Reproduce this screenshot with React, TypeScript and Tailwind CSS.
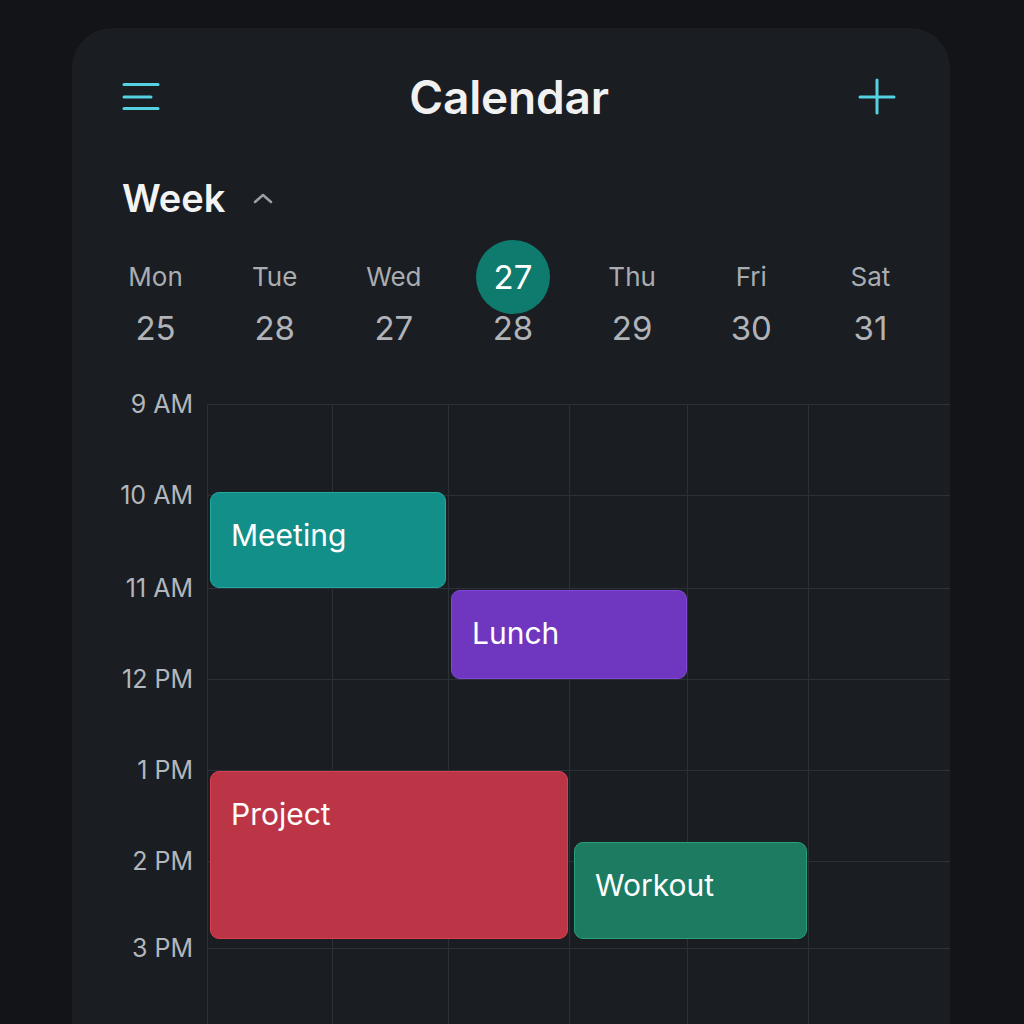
import React from 'react'

type CalEvent = {
  title: string
  left: number
  top: number
  width: number
  height: number
  className: string
}

const days = [
  { label: 'Mon', date: 25 },
  { label: 'Tue', date: 28 },
  { label: 'Wed', date: 27 },
  { label: '27', date: 28, today: true },
  { label: 'Thu', date: 29 },
  { label: 'Fri', date: 30 },
  { label: 'Sat', date: 31 },
]

// hour rows, heights in px
const hours = [
  { label: '9 AM', h: 91 },
  { label: '10 AM', h: 93 },
  { label: '11 AM', h: 91 },
  { label: '12 PM', h: 91 },
  { label: '1 PM', h: 91 },
  { label: '2 PM', h: 87 },
  { label: '3 PM', h: 91 },
]

const events: CalEvent[] = [
  { title: 'Meeting', left: 3, top: 88, width: 236, height: 96, className: 'bg-[#138f89] border-[#22aaa1]' },
  { title: 'Lunch', left: 244, top: 186, width: 236, height: 89, className: 'bg-[#6f36c0] border-[#8247d8]' },
  { title: 'Project', left: 3, top: 367, width: 358, height: 168, className: 'bg-[#bb3546] border-[#db4052]' },
  { title: 'Workout', left: 367, top: 438, width: 233, height: 97, className: 'bg-[#1d7b61] border-[#27a07a]' },
]

const MenuIcon = () => (
  <svg width="38" height="30" viewBox="0 0 38 30" fill="none">
    <g stroke="#55d2e2" strokeWidth="3" strokeLinecap="round">
      <line x1="2" y1="2.5" x2="36" y2="2.5" />
      <line x1="2" y1="15" x2="29" y2="15" />
      <line x1="2" y1="26.5" x2="36" y2="26.5" />
    </g>
  </svg>
)

const PlusIcon = () => (
  <svg width="38" height="38" viewBox="0 0 38 38" fill="none">
    <g stroke="#55d2e2" strokeWidth="3" strokeLinecap="round">
      <line x1="2" y1="19" x2="36" y2="19" />
      <line x1="19" y1="2" x2="19" y2="35" />
    </g>
  </svg>
)

const ChevronUp = () => (
  <svg width="20" height="12" viewBox="0 0 20 12" fill="none">
    <polyline points="2,10 10,3 18,10" stroke="#9aa0a6" strokeWidth="2.5" strokeLinecap="round" strokeLinejoin="round" />
  </svg>
)

export default function App() {
  return (
    <div className="h-screen w-full overflow-hidden bg-[#121418] font-['Inter',sans-serif]">
      <div className="ml-[72px] mt-[28px] w-[878px] min-h-[1000px] overflow-hidden rounded-t-[40px] bg-[#1a1d22]">
        {/* top bar */}
        <header className="flex h-[56px] items-center justify-between pl-[50px] pr-[54px] mt-[41px]">
          <MenuIcon />
          <h1 className="text-[46px] font-semibold leading-none text-[#f1f1f1] tracking-[-0.2px]">Calendar</h1>
          <PlusIcon />
        </header>

        {/* view switch */}
        <div className="mt-[54px] flex items-center gap-[28px] pl-[50px]">
          <span className="text-[38px] font-semibold leading-none text-[#f3f3f3]">Week</span>
          <ChevronUp />
        </div>

        {/* days */}
        <div className="mt-[47px] grid grid-cols-7 pl-[24px] pr-[20px]">
          {days.map((d, i) => (
            <div key={i} className="flex flex-col items-center">
              <div className="flex h-[26px] items-center justify-center">
                {d.today ? (
                  <span className="-my-[24px] flex h-[74px] w-[74px] items-center justify-center rounded-full bg-[#0e7b6e] text-[33px] leading-none text-white">
                    {d.label}
                  </span>
                ) : (
                  <span className="text-[26px] leading-none text-[#a9adb2]">{d.label}</span>
                )}
              </div>
              <span className="mt-[22px] text-[33px] leading-none text-[#b0b3b8]">{d.date}</span>
            </div>
          ))}
        </div>

        {/* time grid */}
        <div className="mt-[59px] flex">
          <div className="w-[135px] shrink-0 pr-[14px]">
            {hours.map((h) => (
              <div key={h.label} style={{ height: h.h }} className="flex items-start justify-end">
                <span className="-translate-y-1/2 text-[25px] leading-none text-[#b3b7bc]">{h.label}</span>
              </div>
            ))}
          </div>

          <div className="relative flex-1">
            {hours.map((h) => (
              <div key={h.label} style={{ height: h.h }} className="grid grid-cols-[125px_116px_121px_118px_121px_1fr]">
                {[0, 1, 2, 3, 4, 5].map((c) => (
                  <div key={c} className="border-l border-t border-[#2c3038]" />
                ))}
              </div>
            ))}

            {events.map((e) => (
              <div
                key={e.title}
                style={{ left: e.left, top: e.top, width: e.width, height: e.height }}
                className={`absolute rounded-[9px] border px-[20px] pt-[24px] text-[30px] leading-[36px] text-white ${e.className}`}
              >
                {e.title}
              </div>
            ))}
          </div>
        </div>
      </div>
    </div>
  )
}
